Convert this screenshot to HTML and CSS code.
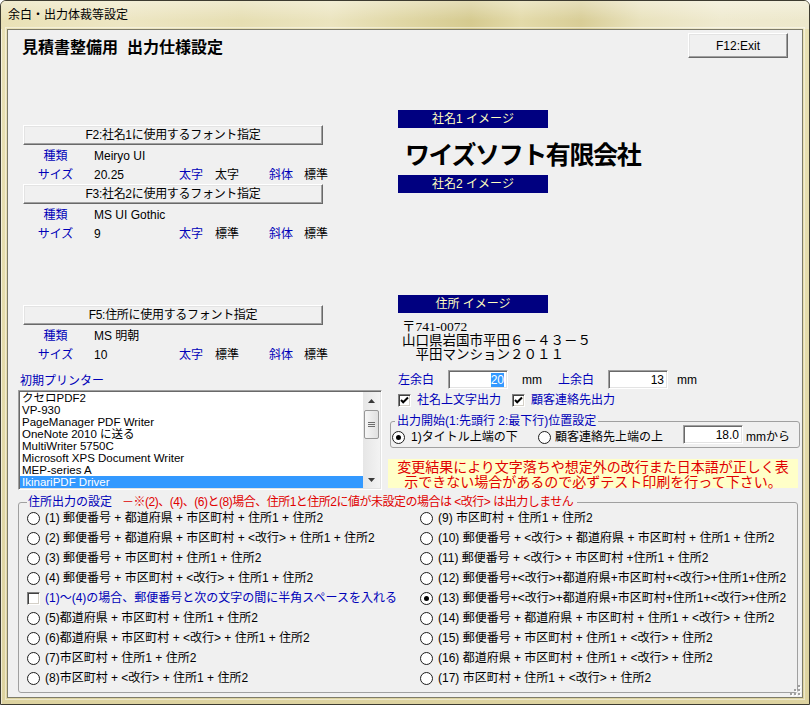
FILE: index.html
```html
<!DOCTYPE html>
<html lang="ja">
<head>
<meta charset="utf-8">
<title>余白・出力体裁等設定</title>
<link rel="stylesheet" href="styles.css">
</head>
<body>
<div class="window">
  <div class="titlebar">余白・出力体裁等設定</div>
  <div class="client">
    <div class="header">
      <h1 class="heading">見積書整備用&nbsp;&nbsp;出力仕様設定</h1>
      <button class="btn btn-exit" type="button">F12:Exit</button>
    </div>

    <div class="main">
      <div class="col-left">
        <button class="btn btn-font btn-f2" type="button">F2:社名1に使用するフォント指定</button>
        <div class="fontrow first"><span class="lbl lbl-c">種類</span><span class="val">Meiryo UI</span></div>
        <div class="fontrow"><span class="lbl lbl-c">サイズ</span><span class="val">20.25</span><span class="lbl">太字</span><span>太字</span><span class="lbl">斜体</span><span>標準</span></div>
        <button class="btn btn-font" type="button">F3:社名2に使用するフォント指定</button>
        <div class="fontrow first"><span class="lbl lbl-c">種類</span><span class="val">MS UI Gothic</span></div>
        <div class="fontrow"><span class="lbl lbl-c">サイズ</span><span class="val">9</span><span class="lbl">太字</span><span>標準</span><span class="lbl">斜体</span><span>標準</span></div>
        <button class="btn btn-font btn-f5" type="button">F5:住所に使用するフォント指定</button>
        <div class="fontrow first"><span class="lbl lbl-c">種類</span><span class="val">MS 明朝</span></div>
        <div class="fontrow"><span class="lbl lbl-c">サイズ</span><span class="val">10</span><span class="lbl">太字</span><span>標準</span><span class="lbl">斜体</span><span>標準</span></div>

        <div class="printer-label">初期プリンター</div>
        <div class="listbox">
          <ul class="items">
            <li>クセロPDF2</li>
            <li>VP-930</li>
            <li>PageManager PDF Writer</li>
            <li>OneNote 2010 に送る</li>
            <li>MultiWriter 5750C</li>
            <li>Microsoft XPS Document Writer</li>
            <li>MEP-series A</li>
            <li class="selected">IkinariPDF Driver</li>
          </ul>
          <div class="scrollbar">
            <div class="sb-btn"><svg width="7" height="4" viewBox="0 0 7 4"><path d="M0 4 L3.5 0 L7 4 Z" fill="#3a3a3a"/></svg></div>
            <div class="sb-thumb"><svg width="7" height="7" viewBox="0 0 7 7"><path d="M0 1.5 H7 M0 3.5 H7 M0 5.5 H7" stroke="#6e6e6e" stroke-width="1"/></svg></div>
            <div class="sb-track"></div>
            <div class="sb-btn"><svg width="7" height="4" viewBox="0 0 7 4"><path d="M0 0 L3.5 4 L7 0 Z" fill="#3a3a3a"/></svg></div>
          </div>
        </div>
      </div>

      <div class="col-right">
        <div class="bar bar1">社名1 イメージ</div>
        <div class="company">ワイズソフト有限会社</div>
        <div class="bar">社名2 イメージ</div>
        <div class="bar bar3">住所 イメージ</div>
        <div class="address">
          <div>〒741-0072</div>
          <div>山口県岩国市平田６－４３－５</div>
          <div>　平田マンション２０１１</div>
        </div>

        <div class="margins">
          <span class="m-label">左余白</span>
          <span class="field"><span class="sel">20</span></span>
          <span class="unit">mm</span>
          <span class="m-label">上余白</span>
          <span class="field">13</span>
          <span class="unit unit2">mm</span>
        </div>

        <div class="checks">
          <span class="check-item ci1"><span class="cb"><svg width="9" height="9" viewBox="0 0 9 9"><path d="M1 4 L3.2 6.3 L8 1.5" fill="none" stroke="#000" stroke-width="2"/></svg></span>社名上文字出力</span>
          <span class="check-item"><span class="cb"><svg width="9" height="9" viewBox="0 0 9 9"><path d="M1 4 L3.2 6.3 L8 1.5" fill="none" stroke="#000" stroke-width="2"/></svg></span>顧客連絡先出力</span>
        </div>

        <fieldset class="group pos-group">
          <legend>出力開始(1:先頭行 2:最下行)位置設定</legend>
          <div class="opt-row">
            <span class="opt opt1"><span class="radio on"></span>1)タイトル上端の下</span>
            <span class="opt opt2"><span class="radio"></span>顧客連絡先上端の上</span>
            <span class="field field-mm">18.0</span>
            <span class="mmkara">mmから</span>
          </div>
        </fieldset>

        <div class="warning">変更結果により文字落ちや想定外の改行また日本語が正しく表<br>示できない場合があるので必ずテスト印刷を行って下さい。</div>
      </div>
    </div>

    <fieldset class="group addr-group">
      <legend><span class="lg-blue">住所出力の設定</span><span class="lg-red">－※(2)、(4)、(6)と(8)場合、住所1と住所2に値が未設定の場合は &lt;改行&gt; は出力しません</span></legend>
      <div class="addr-grid">
        <div class="opt"><span class="radio"></span>(1) 郵便番号 + 都道府県 + 市区町村 + 住所1 + 住所2</div>
        <div class="opt"><span class="radio"></span>(2) 郵便番号 + 都道府県 + 市区町村 + &lt;改行&gt; + 住所1 + 住所2</div>
        <div class="opt"><span class="radio"></span>(3) 郵便番号 + 市区町村 + 住所1 + 住所2</div>
        <div class="opt"><span class="radio"></span>(4) 郵便番号 + 市区町村 + &lt;改行&gt; + 住所1 + 住所2</div>
        <div class="opt opt-blue"><span class="cb"></span>(1)～(4)の場合、郵便番号と次の文字の間に半角スペースを入れる</div>
        <div class="opt"><span class="radio"></span>(5)都道府県 + 市区町村 + 住所1 + 住所2</div>
        <div class="opt"><span class="radio"></span>(6)都道府県 + 市区町村 + &lt;改行&gt; + 住所1 + 住所2</div>
        <div class="opt"><span class="radio"></span>(7)市区町村 + 住所1 + 住所2</div>
        <div class="opt"><span class="radio"></span>(8)市区町村 + &lt;改行&gt; + 住所1 + 住所2</div>

        <div class="opt"><span class="radio"></span>(9) 市区町村 + 住所1 + 住所2</div>
        <div class="opt"><span class="radio"></span>(10) 郵便番号 + &lt;改行&gt; + 都道府県 + 市区町村 + 住所1 + 住所2</div>
        <div class="opt"><span class="radio"></span>(11) 郵便番号 + &lt;改行&gt; + 市区町村 +住所1 + 住所2</div>
        <div class="opt"><span class="radio"></span>(12) 郵便番号+&lt;改行&gt;+都道府県+市区町村+&lt;改行&gt;+住所1+住所2</div>
        <div class="opt"><span class="radio on"></span>(13) 郵便番号+&lt;改行&gt;+都道府県+市区町村+住所1+&lt;改行&gt;+住所2</div>
        <div class="opt"><span class="radio"></span>(14) 郵便番号 + 都道府県 + 市区町村 + 住所1 + &lt;改行&gt; + 住所2</div>
        <div class="opt"><span class="radio"></span>(15) 郵便番号 + 市区町村 + 住所1 + &lt;改行&gt; + 住所2</div>
        <div class="opt"><span class="radio"></span>(16) 都道府県 + 市区町村 + 住所1 + &lt;改行&gt; + 住所2</div>
        <div class="opt"><span class="radio"></span>(17) 市区町村 + 住所1 + &lt;改行&gt; + 住所2</div>
      </div>
    </fieldset>

    <svg class="grip" width="12" height="12" viewBox="0 0 12 12">
      <g fill="#fff"><rect x="10" y="2" width="2" height="2"/><rect x="10" y="6" width="2" height="2"/><rect x="6" y="6" width="2" height="2"/><rect x="10" y="10" width="2" height="2"/><rect x="6" y="10" width="2" height="2"/><rect x="2" y="10" width="2" height="2"/></g>
      <g fill="#a0a0a0"><rect x="9" y="1" width="2" height="2"/><rect x="9" y="5" width="2" height="2"/><rect x="5" y="5" width="2" height="2"/><rect x="9" y="9" width="2" height="2"/><rect x="5" y="9" width="2" height="2"/><rect x="1" y="9" width="2" height="2"/></g>
    </svg>
  </div>
</div>
</body>
</html>
```

FILE: styles.css
```css
* { box-sizing: border-box; }

html, body { margin: 0; padding: 0; }

body {
  width: 810px;
  height: 705px;
  overflow: hidden;
  background: #ffffff;
  font-family: "Liberation Sans", "Noto Sans CJK JP", sans-serif;
  font-size: 12px;
  line-height: 14px;
  color: #000;
}

.window {
  width: 810px;
  height: 705px;
  border: 1px solid #3d3b30;
  border-radius: 6px 6px 0 0;
  background: linear-gradient(180deg, #e9e1b5 0%, #e4dbaa 55%, #ddd3a0 100%);
  box-shadow: inset 1px 1px 0 rgba(255, 255, 255, 0.55);
  display: flex;
  flex-direction: column;
  overflow: hidden;
}

.titlebar {
  flex: none;
  height: 28px;
  padding-left: 7px;
  line-height: 28px;
  font-size: 12px;
  background:
    linear-gradient(180deg, rgba(255, 255, 255, 0.35) 0%, rgba(255, 255, 255, 0) 70%),
    linear-gradient(90deg, #e9e1b6 0px, #ede6c3 120px, #e6deb2 240px, #ebe4bf 330px, #e0d7a5 400px, #d5ca8f 470px, #e3daa9 520px, #d8cd96 580px, #e9e2bd 640px, #efeacf 720px, #ede8cb 808px);
}

.client {
  flex: none;
  position: relative;
  height: 669px;
  margin: 0 6px;
  border: 1px solid #7d7b69;
  outline: 1px solid rgba(255, 255, 255, 0.45);
  outline-offset: 1px;
  background: #f0f0f0;
  display: flex;
  flex-direction: column;
}

/* header */
.header {
  flex: none;
  height: 31px;
  padding: 3px 14px 0 14px;
  display: flex;
  justify-content: space-between;
  align-items: flex-start;
}

.heading {
  margin: 5px 0 0;
  font-family: "Liberation Sans", "Noto Sans CJK JP", sans-serif;
  font-size: 16px;
  line-height: 20px;
  font-weight: 700;
}

.btn {
  font: inherit;
  font-size: 12px;
  line-height: 16px;
  color: #000;
  padding: 0;
  background: #f0f0f0;
  border: 1px solid;
  border-color: #ffffff #696969 #696969 #ffffff;
  box-shadow: inset -1px -1px 0 #a0a0a0, inset 1px 1px 0 #e3e3e3;
  border-radius: 0;
}

.btn-exit { width: 100px; height: 25px; }

/* main two-column area */
.main {
  flex: none;
  display: grid;
  grid-template-columns: 372px 422px;
}

.col-left {
  padding-left: 10px;
  display: flex;
  flex-direction: column;
  align-items: flex-start;
}

.col-right {
  display: flex;
  flex-direction: column;
  align-items: flex-start;
}

.btn-font { width: 300px; height: 20px; margin-left: 5px; letter-spacing: -0.3px; }
.btn-f2 { margin-top: 64px; }
.btn-f5 { margin-top: 62px; }

.fontrow {
  display: grid;
  grid-template-columns: 41px 103px 36px 54px 35px 1fr;
  width: 362px;
  height: 19px;
  padding: 1px 0 0 17px;
  line-height: 18px;
  white-space: nowrap;
}
.fontrow.first { margin-top: 1px; }

.lbl { color: #0000b8; }
.lbl-c { text-align: center; }
.val { padding-left: 18px; }

.printer-label {
  margin: 8px 0 0 2px;
  height: 18px;
  line-height: 18px;
  color: #0000b8;
}

.listbox {
  width: 364px;
  height: 100px;
  padding: 1px;
  border: 1px solid;
  border-color: #a0a0a0 #ffffff #ffffff #a0a0a0;
  box-shadow: inset 1px 1px 0 #696969, inset -1px -1px 0 #e3e3e3;
  background: #fff;
  display: flex;
}

.items {
  flex: 1;
  list-style: none;
  margin: 0;
  padding: 0;
}

.items li {
  height: 12px;
  line-height: 12px;
  padding-left: 2px;
  white-space: nowrap;
  font-size: 11.5px;
  overflow: hidden;
}

.items li.selected { background: #3399ff; color: #fff; }

.scrollbar {
  flex: none;
  width: 17px;
  background: linear-gradient(90deg, #e6e6e6, #f3f3f3);
  display: flex;
  flex-direction: column;
}

.sb-btn {
  flex: none;
  height: 17px;
  display: flex;
  align-items: center;
  justify-content: center;
}

.sb-thumb {
  flex: none;
  height: 29px;
  margin: 1px 1px 0 1px;
  border: 1px solid #979797;
  border-radius: 2px;
  background: linear-gradient(90deg, #f6f6f6, #e0e0e0);
  display: flex;
  align-items: center;
  justify-content: center;
}

.sb-track { flex: 1; }

/* right column */
.bar {
  width: 150px;
  height: 18px;
  margin-left: 18px;
  background: #000080;
  color: #ffffc0;
  text-align: center;
  line-height: 18px;
  white-space: nowrap;
}
.bar1 { margin-top: 49px; }
.bar3 { margin-top: 102px; }

.company {
  height: 47px;
  margin-left: 25px;
  padding-top: 3px;
  line-height: 44px;
  font-family: "Noto Sans CJK JP", sans-serif;
  font-size: 25px;
  font-weight: 700;
  letter-spacing: -1.4px;
  white-space: nowrap;
}

.address {
  margin: 7px 0 0 22px;
  font-family: "Liberation Serif", "Noto Sans CJK JP", serif;
  font-size: 13.5px;
  line-height: 14px;
  white-space: nowrap;
}

.margins {
  margin: 8px 0 0 18px;
  height: 19px;
  display: flex;
  align-items: center;
  white-space: nowrap;
}

.m-label { width: 50px; color: #0000b8; }

.field {
  width: 60px;
  height: 19px;
  padding: 2px 3px 0 0;
  background: #fff;
  border: 1px solid;
  border-color: #a0a0a0 #ffffff #ffffff #a0a0a0;
  box-shadow: inset 1px 1px 0 #696969, inset -1px -1px 0 #e3e3e3;
  text-align: right;
  line-height: 14px;
}

.sel { background: #3399ff; color: #fff; }

.unit { width: 36px; margin-left: 14px; }
.unit2 { margin-left: 9px; }

.checks {
  margin: 3px 0 0 18px;
  height: 16px;
  display: flex;
  align-items: center;
  white-space: nowrap;
}

.check-item {
  display: flex;
  align-items: center;
  gap: 6px;
  color: #0000b8;
}
.ci1 { width: 114px; }

.cb {
  flex: none;
  width: 13px;
  height: 13px;
  background: #fff;
  border: 1px solid;
  border-color: #808080 #ffffff #ffffff #808080;
  box-shadow: inset 1px 1px 0 #404040, inset -1px -1px 0 #d4d0c8;
  display: inline-flex;
  align-items: center;
  justify-content: center;
}

.group {
  margin: 0;
  padding: 0;
  border: 1px solid #a0a0a0;
  border-radius: 3px;
  min-width: 0;
}

.group legend {
  padding: 0 2px;
  line-height: 12px;
  background: #f0f0f0;
  white-space: nowrap;
}

.pos-group {
  width: 410px;
  margin: 7px 0 0 10px;
}
.pos-group legend { margin-left: 4px; color: #0000b8; }

.opt-row {
  height: 20px;
  padding-left: 1px;
  display: flex;
  align-items: center;
  white-space: nowrap;
}

.opt {
  display: flex;
  align-items: center;
  white-space: nowrap;
}
.opt1 { width: 146px; gap: 6px; }
.opt2 { width: 145px; gap: 4px; }

.field-mm { align-self: flex-start; margin-top: -2px; }
.mmkara { margin-left: 3px; }

.radio {
  flex: none;
  width: 13px;
  height: 13px;
  border-radius: 50%;
  border: 1px solid #1c1c1c;
  background: #fff;
  display: inline-flex;
  align-items: center;
  justify-content: center;
}
.radio.on::after {
  content: "";
  width: 5px;
  height: 5px;
  border-radius: 50%;
  background: #000;
}

.warning {
  width: 410px;
  height: 29px;
  margin: 11px 0 0 8px;
  padding-top: 0;
  background: #ffffc8;
  color: #e00000;
  font-family: "Noto Sans CJK JP", sans-serif;
  font-size: 14px;
  line-height: 14.5px;
  text-align: center;
  white-space: nowrap;
}

/* address output settings group */
.addr-group {
  flex: none;
  margin: 6px 4px 0 10px;
  padding: 0 0 4px 8px;
}
.addr-group legend { padding: 0 4px 0 1px; }

.lg-blue { color: #0000b8; }
.lg-red { color: #e00000; margin-left: 10px; letter-spacing: -0.5px; }

.addr-grid {
  display: grid;
  grid-template-columns: 393px 1fr;
  grid-template-rows: repeat(9, 20px);
  grid-auto-flow: column;
}

.addr-grid .opt { gap: 5px; height: 20px; }
.addr-grid .opt-blue { color: #0000b8; }

.grip {
  position: absolute;
  right: 1px;
  bottom: 1px;
}
```
